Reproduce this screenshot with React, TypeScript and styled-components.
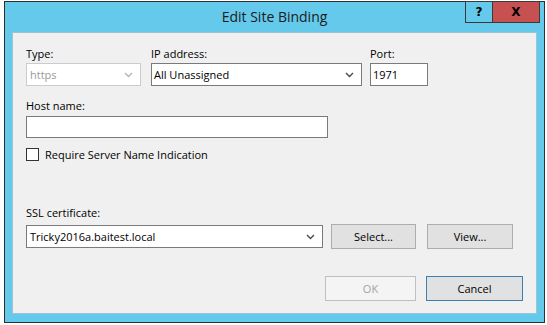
import styled, { createGlobalStyle } from 'styled-components';

const GlobalStyle = createGlobalStyle`
  html, body {
    margin: 0;
    padding: 0;
    background: #ffffff;
  }
  * {
    box-sizing: border-box;
  }
`;

const font = `"Open Sans", "Noto Sans", "Liberation Sans", sans-serif`;

function Chevron({ disabled }: { disabled?: boolean }) {
  return (
    <svg width="9" height="6" viewBox="0 0 9 6">
      <path
        d="M1 1 L4.5 4.5 L8 1"
        fill="none"
        stroke={disabled ? '#b4b4b4' : '#4a4a4a'}
        strokeWidth="1.4"
      />
    </svg>
  );
}

function App() {
  return (
    <>
      <GlobalStyle />
      <Desktop>
        <Window>
          <TitleBar>
            <span />
            <Title>Edit Site Binding</Title>
            <CaptionArea>
              <CaptionGroup>
                <HelpButton>?</HelpButton>
                <CloseButton>X</CloseButton>
              </CaptionGroup>
            </CaptionArea>
          </TitleBar>
          <Client>
            <Row>
              <Field $w={115} $gap={1}>
                <Label>Type:</Label>
                <Combo $disabled>
                  <span>https</span>
                  <Chevron disabled />
                </Combo>
              </Field>
              <Field $w={211} $gap={1} $ml={10}>
                <Label>IP address:</Label>
                <Combo>
                  <span>All Unassigned</span>
                  <Chevron />
                </Combo>
              </Field>
              <Field $w={58} $gap={1} $ml={8}>
                <Label>Port:</Label>
                <TextBox $h={23}>1971</TextBox>
              </Field>
            </Row>

            <Field $w={302} $gap={2} $mt={12}>
              <Label>Host name:</Label>
              <TextBox $h={22} />
            </Field>

            <CheckRow>
              <CheckBox />
              <CheckLabel>Require Server Name Indication</CheckLabel>
            </CheckRow>

            <Field $w={490} $gap={3} $mt={44}>
              <Label>SSL certificate:</Label>
              <CertRow>
                <CertCombo>
                  <span>Tricky2016a.baitest.local</span>
                  <Chevron />
                </CertCombo>
                <Button $w={85} $ml={8}>Select...</Button>
                <Button $w={86} $ml={11}>View...</Button>
              </CertRow>
            </Field>

            <Footer>
              <Button $w={91} $disabled>OK</Button>
              <Button $w={97} $ml={10} $primary>Cancel</Button>
            </Footer>
          </Client>
        </Window>
      </Desktop>
    </>
  );
}

export default App;

const Desktop = styled.div`
  width: 547px;
  height: 325px;
  padding: 1px 2px 0 4px;
  overflow: hidden;
  background: #ffffff;
  font-family: ${font};
`;

const Window = styled.div`
  width: 541px;
  height: 322px;
  display: flex;
  flex-direction: column;
  border: 1px solid #2f2f2f;
  background: #64c9ea;
`;

const TitleBar = styled.div`
  height: 30px;
  display: grid;
  grid-template-columns: 79px 1fr 79px;
  align-items: start;
`;

const Title = styled.div`
  text-align: center;
  font-size: 14px;
  line-height: 30px;
  color: #1b1b1b;
  white-space: nowrap;
`;

const CaptionArea = styled.div`
  display: flex;
  justify-content: flex-end;
  padding-right: 4px;
  margin-top: -1px;
`;

const CaptionGroup = styled.div`
  display: flex;
  height: 22px;
  border: 1px solid #3a3a3a;
`;

const HelpButton = styled.div`
  width: 27px;
  border-right: 1px solid #3a3a3a;
  display: flex;
  align-items: center;
  justify-content: center;
  font-family: "DejaVu Sans", sans-serif;
  font-weight: bold;
  font-size: 12px;
  color: #000;
`;

const CloseButton = styled.div`
  width: 46px;
  background: #c75050;
  display: flex;
  align-items: center;
  justify-content: center;
  font-family: "DejaVu Sans", sans-serif;
  font-weight: bold;
  font-size: 12px;
  color: #000;
`;

const Client = styled.div`
  flex: 1;
  margin: 0 7px 8px 7px;
  padding: 13px 13px 0 13px;
  display: flex;
  flex-direction: column;
  background: #f0f0f0;
  border: 1px solid #9fc2d4;
  font-size: 11px;
  color: #000;
`;

const Row = styled.div`
  display: flex;
`;

const Field = styled.div<{ $w: number; $gap: number; $ml?: number; $mt?: number }>`
  display: flex;
  flex-direction: column;
  width: ${(p) => p.$w}px;
  gap: ${(p) => p.$gap}px;
  margin-left: ${(p) => p.$ml ?? 0}px;
  margin-top: ${(p) => p.$mt ?? 0}px;
`;

const Label = styled.div`
  height: 16px;
  line-height: 16px;
  white-space: nowrap;
`;

const Combo = styled.div<{ $disabled?: boolean }>`
  height: 23px;
  display: flex;
  align-items: center;
  justify-content: space-between;
  padding: 0 7px 0 ${(p) => (p.$disabled ? 3 : 2)}px;
  background: #ffffff;
  border: 1px solid ${(p) => (p.$disabled ? '#cccccc' : '#7a7a7a')};
  color: ${(p) => (p.$disabled ? '#9a9a9a' : '#000000')};
  white-space: nowrap;
`;

const CertCombo = styled(Combo)`
  width: 297px;
  padding-left: 3px;
`;

const TextBox = styled.div<{ $h: number }>`
  height: ${(p) => p.$h}px;
  line-height: ${(p) => p.$h - 2}px;
  padding: 0 2px;
  background: #ffffff;
  border: 1px solid #7a7a7a;
`;

const CheckRow = styled.div`
  display: flex;
  align-items: center;
  gap: 6px;
  margin-top: 10px;
  height: 13px;
`;

const CheckBox = styled.div`
  width: 13px;
  height: 13px;
  background: #ffffff;
  border: 1px solid #333333;
`;

const CheckLabel = styled.span`
  line-height: 13px;
  white-space: nowrap;
`;

const CertRow = styled.div`
  display: flex;
  align-items: center;
  height: 25px;
`;

const Button = styled.div<{ $w: number; $ml?: number; $disabled?: boolean; $primary?: boolean }>`
  width: ${(p) => p.$w}px;
  height: 25px;
  margin-left: ${(p) => p.$ml ?? 0}px;
  display: flex;
  align-items: center;
  justify-content: center;
  background: ${(p) => (p.$disabled ? '#f4f4f4' : '#e1e1e1')};
  border: 1px solid
    ${(p) => (p.$disabled ? '#bfbfbf' : p.$primary ? '#3c7fb1' : '#adadad')};
  color: ${(p) => (p.$disabled ? '#a3a3a3' : '#000000')};
  white-space: nowrap;
`;

const Footer = styled.div`
  display: flex;
  justify-content: flex-end;
  margin-top: 27px;
`;
